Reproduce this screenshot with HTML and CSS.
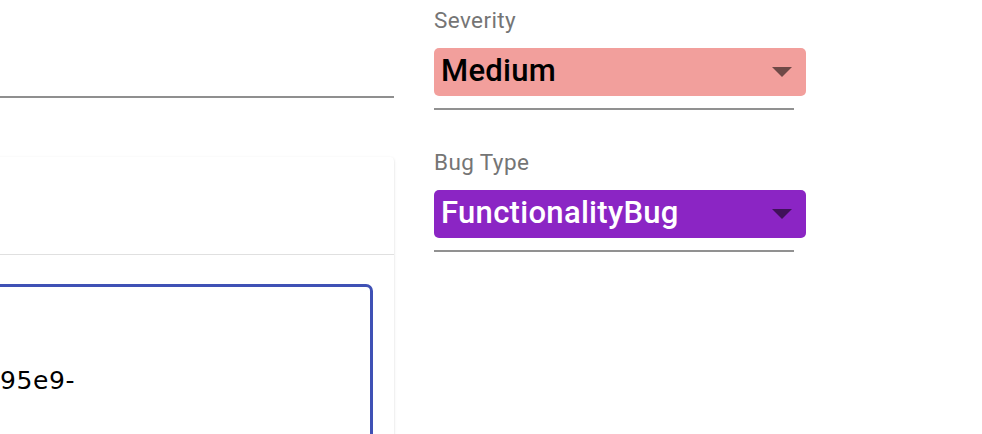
FILE: index.html
```html
<!DOCTYPE html>
<html lang="en">
<head>
<meta charset="utf-8">
<title>Bug details</title>
<link rel="stylesheet" href="styles.css">
</head>
<body>
<div class="page">
  <div class="left">
    <div class="title-field"></div>
    <div class="card">
      <div class="card-header"></div>
      <div class="card-body">
        <div class="id-box">
          <span class="id-text">95e9-</span>
        </div>
      </div>
    </div>
  </div>
  <div class="right">
    <div class="field">
      <div class="label">Severity</div>
      <div class="select select-medium">
        <span class="value">Medium</span>
        <span class="arrow"></span>
      </div>
      <div class="underline"></div>
    </div>
    <div class="field">
      <div class="label">Bug Type</div>
      <div class="select select-func">
        <span class="value">FunctionalityBug</span>
        <span class="arrow"></span>
      </div>
      <div class="underline"></div>
    </div>
  </div>
</div>
</body>
</html>
```
FILE: styles.css
```css
html, body {
  margin: 0;
  padding: 0;
  background: #fff;
  overflow: hidden;
}
body {
  font-family: Roboto, "Noto Sans", sans-serif;
}
.page {
  display: flex;
  align-items: flex-start;
  gap: 40px;
  width: 982px;
  height: 434px;
  overflow: hidden;
}
.left {
  width: 454px;
  margin-left: -60px;
  flex: none;
  display: flex;
  flex-direction: column;
}
.title-field {
  flex: none;
  height: 96px;
  border-bottom: 2px solid #8f8f8f;
  margin-left: 60px;
}
.card {
  flex: none;
  margin-top: 59px;
  background: #fff;
  border-radius: 4px;
  box-shadow: 0 2px 1px -1px rgba(0,0,0,0.2), 0 1px 1px 0 rgba(0,0,0,0.14), 0 1px 3px 0 rgba(0,0,0,0.12);
}
.card-header {
  height: 97px;
  border-bottom: 1px solid #e0e0e0;
}
.card-body {
  padding: 29px 21px 0 30px;
}
.id-box {
  height: 220px;
  border: 3px solid #3f51b5;
  border-radius: 7px;
  padding: 80px 14px 0 27px;
  box-sizing: border-box;
}
.id-text {
  display: block;
  font-family: "DejaVu Sans", sans-serif;
  font-size: 25px;
  line-height: 28px;
  color: #000;
  letter-spacing: 0.6px;
}
.right {
  width: 372px;
  flex: none;
  display: flex;
  flex-direction: column;
  padding-top: 7px;
}
.field {
  display: flex;
  flex-direction: column;
  margin-bottom: 39px;
}
.label {
  font-size: 22.5px;
  line-height: 26px;
  letter-spacing: 0.4px;
  color: #757575;
  margin-bottom: 15px;
}
.select {
  height: 48px;
  box-sizing: border-box;
  border-radius: 5px;
  padding: 0 14px 2px 7px;
  display: flex;
  align-items: center;
  justify-content: space-between;
}
.select-medium {
  background: #f29f9c;
  color: #000;
}
.select-func {
  background: #8b25c4;
  color: #fff;
}
.value {
  font-size: 31px;
  font-weight: 500;
  line-height: 44px;
  letter-spacing: 0.3px;
}
.arrow {
  width: 0;
  height: 0;
  border-left: 10px solid transparent;
  border-right: 10px solid transparent;
  border-top: 10px solid rgba(0,0,0,0.54);
  margin-top: 1px;
}
.underline {
  margin-top: 12px;
  width: 360px;
  height: 2px;
  background: #919191;
}
```
